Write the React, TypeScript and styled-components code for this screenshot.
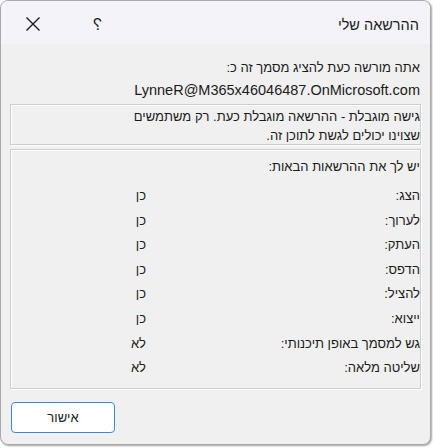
import React from "react";
import styled, { createGlobalStyle } from "styled-components";

const GlobalStyle = createGlobalStyle`
  html, body {
    margin: 0;
    padding: 0;
    background: #ffffff;
  }
  body {
    font-family: "Liberation Sans", Arial, "Noto Sans", sans-serif;
    color: #1b1b1b;
  }
`;

const permissions = [
  { label: "הצג:", value: "כן" },
  { label: "לערוך:", value: "כן" },
  { label: "העתק:", value: "כן" },
  { label: "הדפס:", value: "כן" },
  { label: "להציל:", value: "כן" },
  { label: "ייצוא:", value: "כן" },
  { label: "גש למסמך באופן תיכנותי:", value: "לא" },
  { label: "שליטה מלאה:", value: "לא" },
];

function App() {
  return (
    <>
      <GlobalStyle />
      <Screen>
        <Window dir="rtl">
          <TitleBar>
            <Title>ההרשאה שלי</Title>
            <Controls>
              <HelpButton>?</HelpButton>
              <CloseButton aria-label="סגור">
                <svg width="16" height="16" viewBox="0 0 16 16">
                  <path
                    d="M1.5 1.5 L14.5 14.5 M14.5 1.5 L1.5 14.5"
                    stroke="#1b1b1b"
                    strokeWidth="1.4"
                    fill="none"
                  />
                </svg>
              </CloseButton>
            </Controls>
          </TitleBar>
          <Body>
            <Line>אתה מורשה כעת להציג מסמך זה כ:</Line>
            <Email dir="ltr">LynneR@M365x46046487.OnMicrosoft.com</Email>
            <NoticeBox>
              גישה מוגבלת - ההרשאה מוגבלת כעת. רק משתמשים
              <br />
              שצוינו יכולים לגשת לתוכן זה.
            </NoticeBox>
            <PermissionBox>
              <BoxHeading>יש לך את ההרשאות הבאות:</BoxHeading>
              <PermissionList>
                {permissions.map((p) => (
                  <PermissionRow key={p.label}>
                    <Label>{p.label}</Label>
                    <Value>{p.value}</Value>
                  </PermissionRow>
                ))}
              </PermissionList>
            </PermissionBox>
            <Footer>
              <OkButton>אישור</OkButton>
            </Footer>
          </Body>
        </Window>
      </Screen>
    </>
  );
}

const Screen = styled.div`
  width: 433px;
  height: 448px;
  background: #ffffff;
  overflow: hidden;
`;

const Window = styled.div`
  box-sizing: border-box;
  width: 431px;
  height: 445px;
  border: 1px solid #a9a9a9;
  border-radius: 8px;
  overflow: hidden;
  background: #f0f0f0;
  box-shadow: 1px 1px 2px rgba(0, 0, 0, 0.35);
  display: flex;
  flex-direction: column;
`;

const TitleBar = styled.div`
  height: 43px;
  flex-shrink: 0;
  background: #f3f3f9;
  display: flex;
  align-items: center;
  justify-content: space-between;
  padding: 0 11px 0 24px;
`;

const Title = styled.div`
  font-size: 14.5px;
  padding-top: 4px;
`;

const Controls = styled.div`
  display: flex;
  align-items: center;
  gap: 52px;
`;

const HelpButton = styled.div`
  font-size: 16px;
  padding-top: 4px;
  transform: scaleX(-1);
`;

const CloseButton = styled.div`
  display: flex;
  align-items: center;
  padding-top: 2px;
`;

const Body = styled.div`
  flex: 1;
  display: flex;
  flex-direction: column;
  padding: 12px 9px 0 9px;
`;

const Line = styled.div`
  font-size: 13px;
  line-height: 23px;
  padding-right: 1px;
`;

const Email = styled.div`
  font-size: 14.5px;
  line-height: 23px;
  padding-right: 1px;
  text-align: right;
`;

const EtchedBox = styled.div`
  box-sizing: border-box;
  border: 1px solid #cdcdcd;
  box-shadow: inset 1px 1px 0 #ffffff, 1px 1px 0 #ffffff;
`;

const NoticeBox = styled(EtchedBox)`
  margin-top: 2px;
  height: 41px;
  padding: 2px 0 0 4px;
  font-size: 13px;
  line-height: 19px;
`;

const PermissionBox = styled(EtchedBox)`
  margin-top: 4px;
  height: 240px;
  padding: 6px 0 0 0;
`;

const BoxHeading = styled.div`
  font-size: 13px;
  line-height: 22px;
`;

const PermissionList = styled.div`
  display: flex;
  flex-direction: column;
  margin-top: 6px;
`;

const PermissionRow = styled.div`
  display: grid;
  grid-template-columns: 274px auto;
  font-size: 13px;
  line-height: 24.6px;
`;

const Label = styled.div``;

const Value = styled.div``;

const Footer = styled.div`
  display: flex;
  justify-content: flex-end;
  margin-top: 13px;
`;

const OkButton = styled.button`
  box-sizing: border-box;
  width: 104px;
  height: 31px;
  margin-left: 1px;
  background: #ffffff;
  border: 1px solid #3b8ad9;
  border-radius: 4px;
  font-family: "Liberation Sans", Arial, sans-serif;
  font-size: 13px;
  color: #1b1b1b;
  cursor: pointer;
`;

export default App;
